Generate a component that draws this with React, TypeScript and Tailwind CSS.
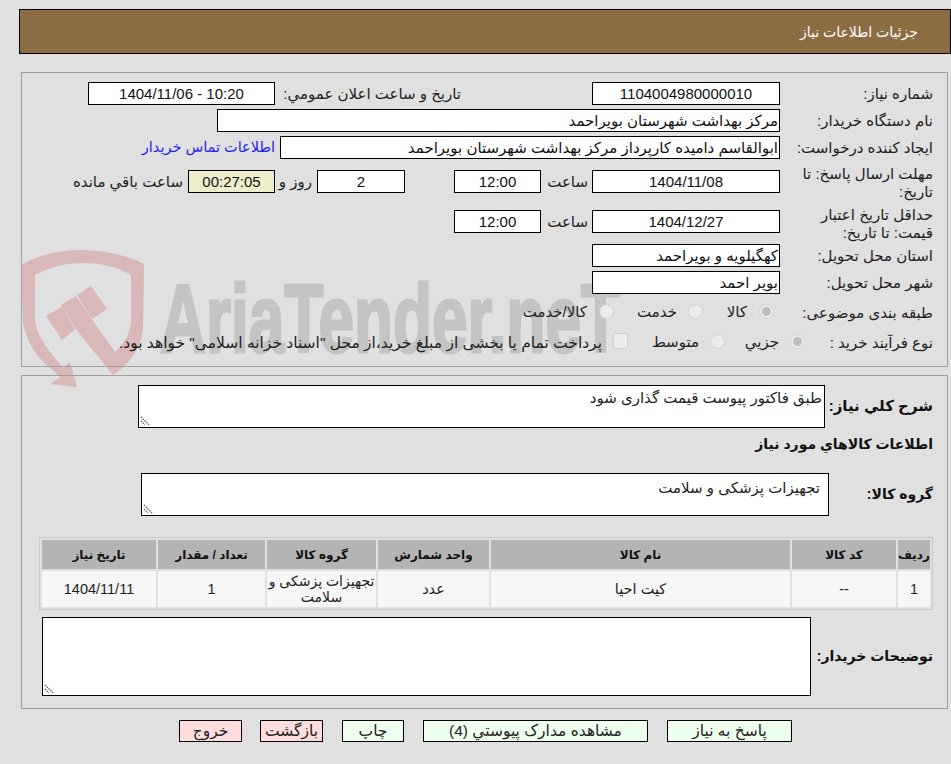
import type { ReactNode } from "react";

const font = "[font-family:'Liberation_Sans','DejaVu_Sans',sans-serif]";

const Box = ({ className = "", children }: { className?: string; children?: ReactNode }) => (
  <div className={`h-[23px] shrink-0 border border-black text-center text-[15px] leading-[21px] text-[#111] ${className}`}>
    {children}
  </div>
);

const Label = ({ className = "", children }: { className?: string; children: ReactNode }) => (
  <div className={`shrink-0 text-[15px] leading-[18px] text-[#222] ${className}`}>{children}</div>
);

const Radio = ({ checked = false }: { checked?: boolean }) => (
  <span className="-mt-[3px] flex h-[15px] w-[15px] shrink-0 items-center justify-center rounded-full border border-[#d0d0d0] bg-[#ececec]">
    {checked && <span className="h-[9px] w-[9px] rounded-full bg-[#bdbdbd]" />}
  </span>
);

const Grip = () => (
  <svg className="absolute bottom-[1px] left-[1px]" width="11" height="11" viewBox="0 0 11 11">
    <path d="M1 2l8 8M1 6l4 4" stroke="#666" strokeWidth="1.4" strokeDasharray="1.5 1" />
  </svg>
);

const Watermark = () => (
  <svg className="pointer-events-none absolute left-[20px] top-[250px]" width="610" height="140" viewBox="0 0 610 140" direction="ltr">
    <path
      d="M1 15C20 4 42 0 60 0C85 0 108 6 124 14L123 80C120 100 108 115 93 125L95 102C103 95 110 85 111 73L111 25C95 16 80 13 63 13C45 13 30 17 15 25L15 70C17 88 30 102 43 118L50 112L57 137L31 134L40 127L30 118C18 108 6 92 3 73Z"
      fill="#d9b8b8"
    />
    <path d="M26 66L42 57L55 80L42 90ZM41 55L56 46L71 68L95 102L93 125L55 78ZM57 45L71 36L87 59L72 69Z" fill="#d9b8b8" />
    <text
      x="140"
      y="102"
      fontFamily="'Liberation Sans Narrow','Liberation Sans',sans-serif"
      fontWeight="700"
      fontSize="96"
      fill="#c4c4c4"
      stroke="#c4c4c4"
      strokeWidth="3"
      textAnchor="start"
      textLength="460"
      lengthAdjust="spacingAndGlyphs"
    >
      AriaTender.neT
    </text>
  </svg>
);

const buttonClass = "h-[22px] border border-black text-center leading-[20px]";

export default function App() {
  return (
    <div dir="rtl" className={`relative min-h-[764px] overflow-hidden bg-[#e0e0e0] pt-[9px] ${font}`}>
      <Watermark />

      <div className="relative ml-[19px] flex h-[45px] items-center border border-black bg-[#8c6d42] pr-[32px] pt-[2px] text-[14px] text-white">
        جزئیات اطلاعات نیاز
      </div>

      <section className="relative mr-[3px] ml-[21px] mt-[18px] h-[295px] border border-[#a0a0a0] pr-[14px] pt-[9px]">
        <div className="flex h-[23px] items-center">
          <Label className="w-[153px]">شماره نیاز:</Label>
          <Box className="w-[188px] bg-white">1104004980000010</Box>
          <Label className="mr-[131px] w-[186px]">تاریخ و ساعت اعلان عمومي:</Label>
          <Box className="w-[187px] bg-white">
            <span dir="ltr">1404/11/06 - 10:20</span>
          </Box>
        </div>
        <div className="mt-[4px] flex h-[23px] items-center">
          <Label className="w-[153px]">نام دستگاه خریدار:</Label>
          <Box className="w-[563px] bg-white pr-[1px] text-right">مرکز بهداشت شهرستان بویراحمد</Box>
        </div>
        <div className="mt-[4px] flex h-[23px] items-center">
          <Label className="w-[153px]">ایجاد کننده درخواست:</Label>
          <Box className="w-[500px] bg-white pr-[1px] text-right">ابوالقاسم دامیده کارپرداز مرکز بهداشت شهرستان بویراحمد</Box>
          <div className="mr-[5px] whitespace-nowrap text-[14.5px] text-[#2222ee]">اطلاعات تماس خریدار</div>
        </div>
        <div className="mt-[11px] flex h-[40px] items-start">
          <Label className="-mt-[5px] w-[153px] pl-[14px]">مهلت ارسال پاسخ: تا تاریخ:</Label>
          <Box className="w-[188px] bg-white">1404/11/08</Box>
          <Label className="mr-[4px] mt-[3px] w-[47px]">ساعت</Label>
          <Box className="w-[87px] bg-white">12:00</Box>
          <div className="w-[49px]" />
          <Box className="w-[88px] bg-white">2</Box>
          <Label className="mr-[5px] mt-[3px] w-[37px]">روز و</Label>
          <Box className="w-[87px] bg-[#eeeecc]">00:27:05</Box>
          <Label className="mr-[5px] mt-[3px]">ساعت باقي مانده</Label>
        </div>
        <div className="flex h-[34px] items-start">
          <Label className="-mt-[4px] w-[153px] pl-[14px]">حداقل تاریخ اعتبار قیمت: تا تاریخ:</Label>
          <Box className="w-[188px] bg-white">1404/12/27</Box>
          <Label className="mr-[4px] mt-[3px] w-[47px]">ساعت</Label>
          <Box className="w-[87px] bg-white">12:00</Box>
        </div>
        <div className="flex h-[23px] items-center">
          <Label className="w-[153px]">استان محل تحویل:</Label>
          <Box className="w-[188px] bg-white pr-[1px] text-right">کهگیلویه و بویراحمد</Box>
        </div>
        <div className="mt-[4px] flex h-[23px] items-center">
          <Label className="w-[153px]">شهر محل تحویل:</Label>
          <Box className="w-[188px] bg-white pr-[1px] text-right">بویر احمد</Box>
        </div>
        <div className="mt-[7px] flex h-[23px] items-center text-[15px] text-[#222]">
          <Label className="w-[159px]">طبقه بندی موضوعی:</Label>
          <Radio checked />
          <span className="mr-[12px] w-[44px]">کالا</span>
          <Radio />
          <span className="mr-[11px] w-[63px]">خدمت</span>
          <Radio />
          <span className="mr-[12px]">کالا/خدمت</span>
        </div>
        <div className="mt-[7px] flex h-[23px] items-center text-[15px] text-[#222]">
          <Label className="w-[128px]">نوع فرآیند خرید :</Label>
          <Radio checked />
          <span className="mr-[11px] w-[54px]">جزیي</span>
          <Radio />
          <span className="mr-[11px] w-[71px]">متوسط</span>
          <span className="-mt-[4px] h-[16px] w-[15px] shrink-0 rounded-[2px] border border-[#d0d0d0] bg-[#ececec]" />
          <span className="mr-[11px] whitespace-nowrap text-[15.5px]">پرداخت تمام یا بخشی از مبلغ خرید،از محل "اسناد خزانه اسلامی" خواهد بود.</span>
        </div>
      </section>

      <section className="relative mr-[3px] ml-[21px] mt-[8px] h-[334px] border border-[#a0a0a0] pr-[14px] pt-[9px]">
        <div className="flex items-center">
          <div className="w-[108px] shrink-0 text-[15px] font-bold text-[#111]">شرح کلي نیاز:</div>
          <div className="relative h-[43px] w-[687px] border border-black bg-white pr-[2px] text-[15px] leading-[24px] text-[#222]">
            طبق فاکتور پیوست قیمت گذاری شود
            <Grip />
          </div>
        </div>
        <div className="mt-[6px] text-[14px] font-bold leading-[20px] text-[#111]">اطلاعات کالاهاي مورد نیاز</div>
        <div className="mt-[19px] flex items-center">
          <div className="w-[104px] shrink-0 text-[14px] font-bold text-[#111]">گروه کالا:</div>
          <div className="relative h-[43px] w-[688px] border border-black bg-white pr-[8px] text-[15px] leading-[28px] text-[#222]">
            تجهیزات پزشکی و سلامت
            <Grip />
          </div>
        </div>
        <table className="mt-[21px] w-[894px] table-fixed border-separate border-spacing-[2px] border border-[#c8c8c8] text-center text-[14.5px]">
          <thead>
            <tr className="h-[29px] bg-[#b4b4b4] text-[12px] font-bold text-[#111]">
              <th className="w-[32px] p-0">ردیف</th>
              <th className="w-[104px] p-0">کد کالا</th>
              <th className="w-[299px] p-0">نام کالا</th>
              <th className="w-[111px] p-0">واحد شمارش</th>
              <th className="w-[109px] p-0">گروه کالا</th>
              <th className="w-[107px] p-0">تعداد / مقدار</th>
              <th className="p-0">تاریخ نیاز</th>
            </tr>
          </thead>
          <tbody>
            <tr className="h-[36px] bg-[#f6f6f6] text-[#222]">
              <td className="p-0 pt-[1px]">1</td>
              <td className="p-0 pt-[1px]">--</td>
              <td className="p-0 pt-[1px]">کیت احیا</td>
              <td className="p-0 pt-[1px]">عدد</td>
              <td className="p-0 text-[14px] leading-[16px]">تجهیزات پزشکی و سلامت</td>
              <td className="p-0 pt-[1px]">1</td>
              <td className="p-0 pt-[1px]">1404/11/11</td>
            </tr>
          </tbody>
        </table>
        <div className="mt-[7px] flex items-center">
          <div className="w-[122px] shrink-0 text-[14px] font-bold text-[#111]">توضیحات خریدار:</div>
          <div className="relative h-[79px] w-[769px] border border-black bg-white">
            <Grip />
          </div>
        </div>
      </section>

      <div className="relative mt-[11px] flex pr-[159px] text-[15.5px] text-[#222]">
        <div className={`w-[125px] bg-[#eeffee] ${buttonClass}`}>پاسخ به نیاز</div>
        <div className={`mr-[19px] w-[225px] bg-[#eeffee] ${buttonClass}`}>مشاهده مدارک پیوستي (4)</div>
        <div className={`mr-[19px] w-[62px] bg-[#eeffee] ${buttonClass}`}>چاپ</div>
        <div className={`mr-[19px] w-[63px] bg-[#ffdddd] ${buttonClass}`}>بازگشت</div>
        <div className={`mr-[18px] w-[63px] bg-[#ffdddd] ${buttonClass}`}>خروج</div>
      </div>
    </div>
  );
}
